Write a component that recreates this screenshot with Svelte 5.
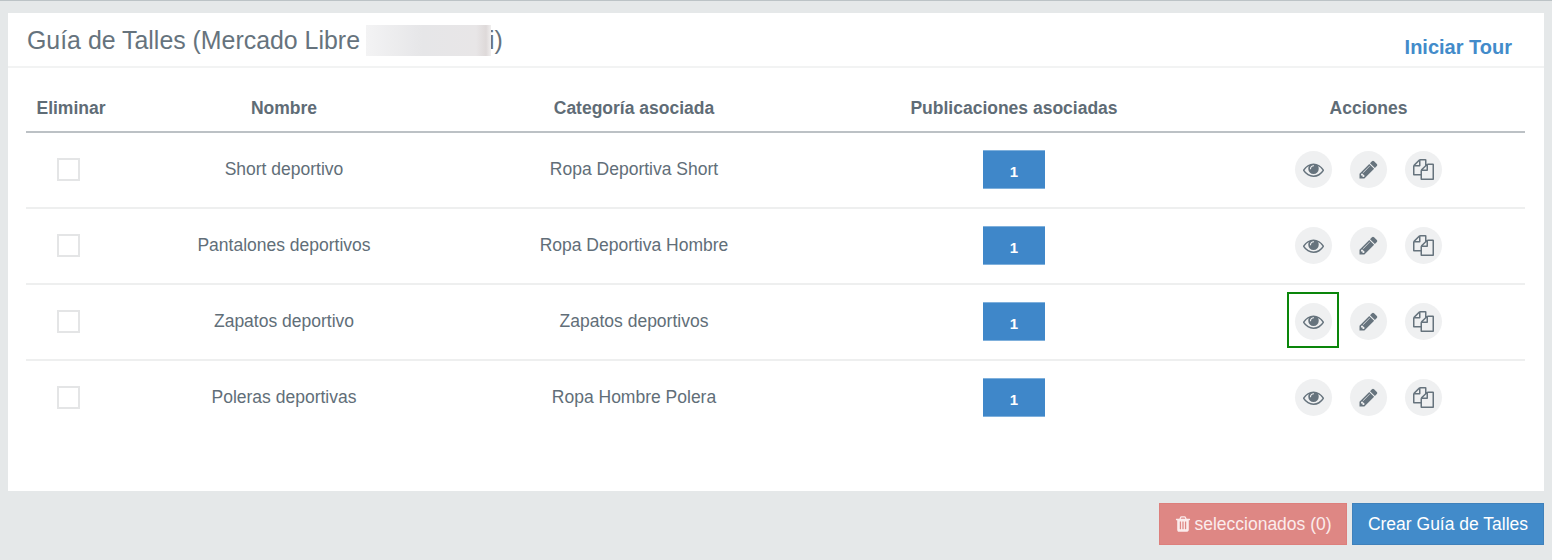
<script>
	const rows = [
		{ name: 'Short deportivo', category: 'Ropa Deportiva Short', count: 1 },
		{ name: 'Pantalones deportivos', category: 'Ropa Deportiva Hombre', count: 1 },
		{ name: 'Zapatos deportivo', category: 'Zapatos deportivos', count: 1, highlight: true },
		{ name: 'Poleras deportivas', category: 'Ropa Hombre Polera', count: 1 }
	];

	const eye = 'M1664 960q-152-236-381-353 61 104 61 225 0 185-131.500 316.500t-316.500 131.500-316.500-131.500-131.500-316.500q0-121 61-225-229 117-381 353 133 205 333.500 326.500t434.500 121.500 434.500-121.500 333.500-326.500zm-720-384q0-20-14-34t-34-14q-125 0-214.500 89.500t-89.500 214.500q0 20 14 34t34 14 34-14 14-34q0-86 61-147t147-61q20 0 34-14t14-34zm848 384q0 34-20 69-140 230-376.500 368.500t-499.500 138.500-499.500-139-376.500-368q-20-35-20-69t20-69q140-229 376.500-368t499.500-139 499.500 139 376.500 368q20 35 20 69z';
	const pencil = 'M491 1536l91-91-235-235-91 91v107h128v128h107zm523-928q0-22-22-22-10 0-17 7l-542 542q-7 7-7 17 0 22 22 22 10 0 17-7l542-542q7-7 7-17zm-54-192l416 416-832 832h-416v-416zm683 96q0 53-37 90l-166 166-416-416 166-165q36-38 90-38 53 0 91 38l235 234q37 39 37 91z';
	const files = 'M1696 384q40 0 68 28t28 68v1216q0 40-28 68t-68 28h-960q-40 0-68-28t-28-68v-288h-544q-40 0-68-28t-28-68v-672q0-40 20-88t48-76l408-408q28-28 76-48t88-20h416q40 0 68 28t28 68v328q68-40 128-40h416zm-544 213l-299 299h299v-299zm-640-384l-299 299h299v-299zm196 647l316-316v-416h-384v416q0 40-28 68t-68 28h-416v640h512v-256q0-40 20-88t48-76zm956 804v-1152h-384v416q0 40-28 68t-68 28h-416v640h896z';
	const trash = 'M704 1376v-704q0-14-9-23t-23-9h-64q-14 0-23 9t-9 23v704q0 14 9 23t23 9h64q14 0 23-9t9-23zm256 0v-704q0-14-9-23t-23-9h-64q-14 0-23 9t-9 23v704q0 14 9 23t23 9h64q14 0 23-9t9-23zm256 0v-704q0-14-9-23t-23-9h-64q-14 0-23 9t-9 23v704q0 14 9 23t23 9h64q14 0 23-9t9-23zm-544-992h448l-48-117q-7-9-17-11h-317q-10 2-17 11zm928 32v64q0 14-9 23t-23 9h-96v948q0 83-47 143.500t-113 60.500h-832q-66 0-113-58.500t-47-141.500v-952h-96q-14 0-23-9t-9-23v-64q0-14 9-23t23-9h309l70-167q15-37 54-63t79-26h320q40 0 79 26t54 63l70 167h309q14 0 23 9t9 23z';
</script>

<div class="page">
	<section class="panel">
		<header class="panel-head">
			<h1>Guía de Talles (Mercado Libre <span class="blurred"></span><span class="tail">i)</span></h1>
			<a class="tour" href="#tour">Iniciar Tour</a>
		</header>

		<div class="table">
			<div class="row head">
				<div class="first">Eliminar</div>
				<div>Nombre</div>
				<div>Categoría asociada</div>
				<div>Publicaciones asociadas</div>
				<div>Acciones</div>
			</div>

			{#each rows as row}
				<div class="row body">
					<div class="check-cell"><span class="check"></span></div>
					<div class="cell">{row.name}</div>
					<div class="cell">{row.category}</div>
					<div><span class="badge">{row.count}</span></div>
					<div class="actions">
						<span class="action-wrap" class:highlight={row.highlight}>
							<button class="action" aria-label="Ver">
								<svg viewBox="0 0 1792 1792" width="21" height="21"><path d={eye} /></svg>
							</button>
						</span>
						<button class="action" aria-label="Editar">
							<svg viewBox="0 0 1792 1792" width="21" height="21"><path d={pencil} /></svg>
						</button>
						<button class="action" aria-label="Duplicar">
							<svg viewBox="0 0 1792 1792" width="21" height="21"><path d={files} /></svg>
						</button>
					</div>
				</div>
			{/each}
		</div>
	</section>

	<footer class="bottom">
		<button class="btn danger">
			<svg viewBox="0 0 1792 1792" width="18" height="18"><path d={trash} /></svg>
			seleccionados (0)
		</button>
		<button class="btn primary">Crear Guía de Talles</button>
	</footer>
</div>

<style>
	:global(body) {
		margin: 0;
		background: #e5e8e9;
	}

	.page {
		height: 559px;
		border-top: 1px solid #bcc3c6;
		padding: 12px 8px 0;
		box-sizing: border-box;
		font-family: "Liberation Sans", Arial, sans-serif;
		color: #616e78;
	}

	.panel {
		height: 478px;
		background: #fff;
		box-sizing: border-box;
	}

	.panel-head {
		height: 55px;
		box-sizing: border-box;
		border-bottom: 2px solid #f2f3f3;
		padding: 0 32px 0 19px;
		display: flex;
		justify-content: space-between;
	}

	h1 {
		margin: 12px 0 0;
		font-size: 24.9px;
		font-weight: 400;
		line-height: 31px;
		white-space: pre;
		display: flex;
		color: #66737d;
	}

	.blurred {
		width: 125px;
		height: 31px;
		margin-left: -1px;
		background: linear-gradient(90deg, #f3f3f4 0%, #e6e6e8 45%, #e8e6e7 88%, #ded9d9 96%, #f0eeee 100%);
		position: relative;
		z-index: 1;
	}

	.tail {
		margin-left: -2px;
	}

	.tour {
		margin-top: 22px;
		font-size: 20px;
		font-weight: 700;
		line-height: 24px;
		color: #428bca;
		text-decoration: none;
	}

	.table {
		margin: 0 19px 0 18px;
	}

	.row {
		display: grid;
		grid-template-columns: 90px 336px 364px 396px 313px;
		text-align: center;
		align-items: center;
	}

	.head {
		height: 65px;
		box-sizing: border-box;
		border-bottom: 2px solid #bcc1c5;
		padding-top: 18px;
		font-size: 17.5px;
		font-weight: 700;
		color: #5f6c76;
	}

	.body {
		height: 76px;
		box-sizing: border-box;
		border-bottom: 2px solid #eeefef;
		font-size: 17.5px;
	}

	.body:last-child {
		border-bottom-color: transparent;
	}

	.cell {
		padding-bottom: 2px;
	}

	.check-cell {
		display: flex;
		padding-left: 31px;
		padding-bottom: 2px;
	}

	.check {
		width: 23px;
		height: 23px;
		box-sizing: border-box;
		border: 2px solid #e4e5e6;
		background: #fff;
	}

	.badge {
		display: block;
		margin: 0 auto 1px;
		width: 62px;
		height: 39px;
		box-sizing: border-box;
		background: #3f87c9;
		border-top: 1px solid #7fb0dc;
		border-bottom: 1px solid #7fb0dc;
		color: #fff;
		font-size: 15px;
		font-weight: 700;
		line-height: 42px;
	}

	.actions {
		display: flex;
		justify-content: center;
		gap: 18px;
		padding-right: 1px;
		padding-bottom: 2px;
	}

	.action-wrap {
		position: relative;
		display: flex;
	}

	.highlight::after {
		content: '';
		position: absolute;
		inset: -11px -7px -8px -8px;
		border: 2px solid #0a860a;
		box-sizing: border-box;
	}

	.action {
		width: 37px;
		height: 37px;
		border: none;
		border-radius: 50%;
		background: #eff0f1;
		padding: 0;
		display: flex;
		align-items: center;
		justify-content: center;
	}

	.action svg {
		fill: #66737d;
	}

	.bottom {
		display: flex;
		justify-content: flex-end;
		gap: 5px;
		margin-top: 12px;
	}

	.btn {
		height: 42px;
		border: 1px solid transparent;
		font-family: inherit;
		font-size: 17.5px;
		color: #fff;
		padding: 0;
		display: flex;
		align-items: center;
		justify-content: center;
		gap: 2px;
	}

	.btn svg {
		fill: #fff;
	}

	.danger {
		width: 188px;
		background: #de8784;
		border-color: #dd7f7c;
		color: #fbecec;
	}

	.danger svg {
		fill: #fbecec;
	}

	.primary {
		width: 192px;
		background: #428bca;
		border-color: #3f81bb;
	}
</style>
